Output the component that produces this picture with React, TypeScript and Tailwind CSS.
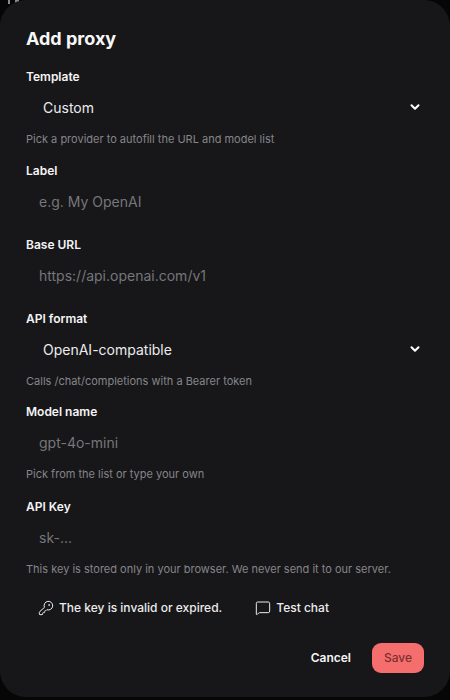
import React from 'react';
import { ChevronDown, KeyRound, MessageSquare } from 'lucide-react';

const Label = ({ children }: { children: React.ReactNode }) => (
  <label className="block h-4 text-xs leading-4 font-semibold text-[#f4f4f5]">{children}</label>
);

const Hint = ({ children, className }: { children: React.ReactNode; className?: string }) => (
  <p className={`h-4 text-[11px] leading-4 text-[#85858a] ${className}`}>{children}</p>
);

const Select = ({ value }: { value: string }) => (
  <button className="mt-[3px] flex h-10 w-full items-center justify-between pl-[17px] pr-[2px] text-sm text-[#ececee]">
    <span>{value}</span>
    <ChevronDown size={14} strokeWidth={3.5} className="-mt-0.5 text-white" />
  </button>
);

const Input = ({ placeholder }: { placeholder: string }) => (
  <input
    placeholder={placeholder}
    className="mt-0.5 block h-10 w-full bg-transparent px-[13px] text-sm text-white outline-none placeholder:text-[#76767a]"
  />
);

export default function App() {
  return (
    <div className="relative h-[700px] w-[450px] overflow-hidden bg-[#060607] font-['Inter',sans-serif]">
      {/* page behind the modal, only a scrap of it shows at the corner */}
      <div className="absolute top-0 left-[8px] h-1 w-0.5 bg-[#8a8a8e]" />
      <div className="absolute top-0 left-[15px] h-[3px] w-1 bg-[#8a8a8e]" />

      <div className="relative h-[697px] rounded-[26px] bg-[#171719] px-[26px] pt-[28px]">
        <h2 className="h-[22px] text-lg leading-[22px] font-bold text-[#f7f7f8]">Add proxy</h2>

        <div className="mt-[19px]">
          <Label>Template</Label>
          <Select value="Custom" />
          <Hint className="mt-[3px]">Pick a provider to autofill the URL and model list</Hint>
        </div>

        <div className="mt-4">
          <Label>Label</Label>
          <Input placeholder="e.g. My OpenAI" />
        </div>

        <div className="mt-4">
          <Label>Base URL</Label>
          <Input placeholder="https://api.openai.com/v1" />
        </div>

        <div className="mt-4">
          <Label>API format</Label>
          <Select value="OpenAI-compatible" />
          <Hint className="mt-[3px]">Calls /chat/completions with a Bearer token</Hint>
        </div>

        <div className="mt-[15px]">
          <Label>Model name</Label>
          <Input placeholder="gpt-4o-mini" />
          <Hint className="mt-1">Pick from the list or type your own</Hint>
        </div>

        <div className="mt-[17px]">
          <Label>API Key</Label>
          <Input placeholder="sk-..." />
          <Hint className="mt-1">This key is stored only in your browser. We never send it to our server.</Hint>
        </div>

        <div className="mt-[13px] flex items-center gap-[33px] pl-[12px] text-xs font-medium text-[#ececee]">
          <button className="flex h-9 items-center gap-[5px]">
            <KeyRound size={16} strokeWidth={1.5} />
            The key is invalid or expired.
          </button>
          <button className="flex h-9 items-center gap-[5px]">
            <MessageSquare size={16} strokeWidth={1.5} />
            Test chat
          </button>
        </div>

        <div className="mt-[17px] flex items-center justify-end gap-[21px] text-xs font-semibold">
          <button className="text-[#f4f4f5]">Cancel</button>
          <button className="h-[30px] w-[52px] rounded-[9px] bg-[#f56e6e] font-medium text-[#7f2f2f]">Save</button>
        </div>
      </div>
    </div>
  );
}
